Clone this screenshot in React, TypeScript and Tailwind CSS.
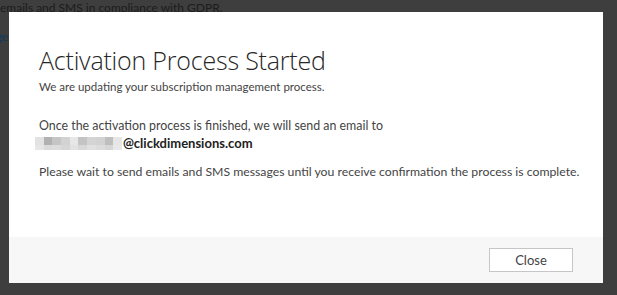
const mosaicTop = ['#e2e2e2', '#b1b1b1', '#c5c5c5', '#d2d2d2', '#e7e7e7', '#c4c4c4', '#d4d4d4', '#d2d2d2', '#bebebe', '#e6e6e6']
const mosaicBottom = ['#e6e6e6', '#dadada', '#dcdcdc', '#d6d6d6', '#e2e2e2', '#d8d8d8', '#e0e0e0', '#dcdcdc', '#d6d6d6', '#e8e8e8']

function BlurredName() {
  return (
    <span className="inline-flex flex-col align-middle mr-[1px]">
      <span className="flex">
        {mosaicTop.map((c, i) => (
          <span key={i} className="block w-[8.7px] h-[8px]" style={{ background: c }} />
        ))}
      </span>
      <span className="flex">
        {mosaicBottom.map((c, i) => (
          <span key={i} className="block w-[8.7px] h-[5px]" style={{ background: c }} />
        ))}
      </span>
    </span>
  )
}

export default function App() {
  return (
    <div className="relative w-[617px] h-[295px] overflow-hidden bg-[#3e3e3e] font-['Lato',sans-serif]">
      {/* page behind the overlay */}
      <div className="pt-[1px] text-[12px] leading-[13px] text-[#1c1c1c]">
        emails and SMS in compliance with GDPR.
      </div>
      <div className="mt-[15px] -ml-[4px] text-[12px] leading-[15px] tracking-[-0.5px] text-[#0e3a63]">ge</div>

      {/* dialog */}
      <div className="absolute left-[9px] top-[12px] w-[594px] h-[271px] bg-white flex flex-col">
        <div className="flex-1 pl-[30px] pt-[33px] text-[#444] whitespace-nowrap">
          <h1 className="font-['Open_Sans',sans-serif] text-[25px] leading-[30px] font-light text-[#262626] tracking-[-0.2px]">
            Activation Process Started
          </h1>
          <p className="mt-[5px] text-[11.5px] leading-[14px] text-[#444]">
            We are updating your subscription management process.
          </p>
          <p className="mt-[24px] text-[12.4px] leading-[16px]">
            Once the activation process is finished, we will send an email to
          </p>
          <p className="mt-[1px] text-[13px] leading-[16px] -ml-[4px] flex items-center">
            <BlurredName />
            <span className="font-bold text-[#222]">@clickdimensions.com</span>
          </p>
          <p className="mt-[13px] text-[12.25px] leading-[16px]">
            Please wait to send emails and SMS messages until you receive confirmation the process is complete.
          </p>
        </div>
        <div className="h-[46px] bg-[#f7f7f7] flex items-center justify-end pr-[30px]">
          <button className="w-[84px] h-[24px] bg-white border border-[#c6c6c6] text-[13px] text-[#444] leading-none">
            Close
          </button>
        </div>
      </div>
    </div>
  )
}
